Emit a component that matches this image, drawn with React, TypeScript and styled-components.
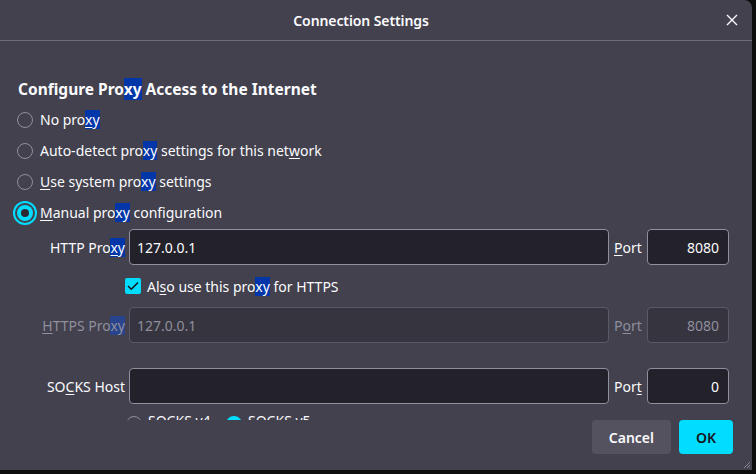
import React from "react";
import styled, { createGlobalStyle, css } from "styled-components";

const Global = createGlobalStyle`
  html, body { margin: 0; padding: 0; background: #0d0d0e; }
  body { font-family: "Noto Sans", "Open Sans", sans-serif; color: #fbfbfe; }
  * { box-sizing: border-box; }
`;

const Dialog = styled.div`
  width: 752px;
  height: 470px;
  background: #42414d;
  border-top-right-radius: 8px;
  display: flex;
  flex-direction: column;
  position: relative;
`;

const Header = styled.div`
  height: 41px;
  border-bottom: 1px solid #6e6d78;
  display: flex;
  align-items: center;
  flex-shrink: 0;
`;

const Title = styled.div`
  flex: 1;
  text-align: center;
  font-size: 14px;
  font-weight: 600;
  letter-spacing: -0.1px;
`;

const CloseBox = styled.div`
  width: 30px;
  padding-right: 10px;
  display: flex;
  justify-content: center;
  align-items: center;
`;

const Content = styled.div`
  height: 379px;
  overflow: hidden;
  padding: 37px 0 0 17px;
  flex-shrink: 0;
`;

const Heading = styled.div`
  font-size: 15.5px;
  font-weight: 700;
  line-height: 22px;
  margin-bottom: 4px;
  padding-left: 1px;
`;

const RadioRow = styled.div`
  height: 31px;
  display: flex;
  align-items: center;
  gap: 7px;
  font-size: 14px;
`;

const RadioCircle = styled.span<{ $checked?: boolean; $focus?: boolean }>`
  width: 16px;
  height: 16px;
  border-radius: 50%;
  flex-shrink: 0;
  border: 1px solid #8f8f9d;
  position: relative;
  ${(p) =>
    p.$checked &&
    css`
      border: none;
      background: #00ddff;
      &::after {
        content: "";
        position: absolute;
        left: 4px;
        top: 4px;
        width: 8px;
        height: 8px;
        border-radius: 50%;
        background: #2b2a33;
      }
    `}
  ${(p) =>
    p.$focus &&
    css`
      outline: 2px solid #00ddff;
      outline-offset: 2px;
    `}
`;

const Hl = styled.span<{ $dim?: boolean }>`
  background: ${(p) => (p.$dim ? "#27448c" : "#0036a8")};
`;

const Key = styled.span`
  text-decoration: underline;
  text-underline-offset: 2px;
`;

const FieldRow = styled.div<{ $mt?: number }>`
  display: flex;
  align-items: center;
  height: 36px;
  margin-top: ${(p) => p.$mt ?? 0}px;
  font-size: 14px;
`;

const FieldLabel = styled.div<{ $disabled?: boolean }>`
  width: 112px;
  padding-right: 4px;
  text-align: right;
  white-space: nowrap;
  color: ${(p) => (p.$disabled ? "#8f8f9d" : "#fbfbfe")};
`;

const Input = styled.div<{ $disabled?: boolean; $w: number; $right?: boolean }>`
  width: ${(p) => p.$w}px;
  height: 36px;
  border-radius: 4px;
  border: 1px solid ${(p) => (p.$disabled ? "#5a5965" : "#8f8f9d")};
  background: ${(p) => (p.$disabled ? "#36353f" : "#23222b")};
  color: ${(p) => (p.$disabled ? "#8f8f9d" : "#fbfbfe")};
  display: flex;
  align-items: center;
  justify-content: ${(p) => (p.$right ? "flex-end" : "flex-start")};
  padding: 0 9px 0 7px;
  font-size: 14px;
`;

const PortLabel = styled.div<{ $disabled?: boolean }>`
  width: 38px;
  padding-left: 5px;
  color: ${(p) => (p.$disabled ? "#8f8f9d" : "#fbfbfe")};
`;

const CheckRow = styled.div`
  height: 42px;
  display: flex;
  align-items: center;
  padding-left: 108px;
  gap: 6px;
  font-size: 14px;
`;

const CheckBox = styled.span`
  width: 16px;
  height: 16px;
  border-radius: 2px;
  background: #00ddff;
  display: flex;
  align-items: center;
  justify-content: center;
`;

const SocksRow = styled.div`
  display: flex;
  align-items: flex-start;
  height: 16px;
  margin-top: 12px;
  padding-left: 109px;
  font-size: 14px;
`;

const SocksOpt = styled.div`
  display: flex;
  align-items: flex-start;
  gap: 6px;
  width: 100px;
`;

const SocksText = styled.span`
  line-height: 14px;
  margin-top: -2px;
`;

const Footer = styled.div`
  display: flex;
  justify-content: flex-end;
  gap: 8px;
  padding: 0 19px 16px 0;
`;

const Button = styled.button<{ $primary?: boolean }>`
  height: 34px;
  border: none;
  border-radius: 4px;
  font-family: inherit;
  font-size: 14px;
  font-weight: 600;
  padding: 0 ${(p) => (p.$primary ? 16 : 17)}px;
  min-width: ${(p) => (p.$primary ? 54 : 78)}px;
  background: ${(p) => (p.$primary ? "#00ddff" : "#53525e")};
  color: ${(p) => (p.$primary ? "#15141a" : "#fbfbfe")};
`;

const Grip = styled.svg`
  position: absolute;
  right: 1px;
  bottom: 1px;
`;

export default function App() {
  return (
    <>
      <Global />
      <Dialog>
        <Header>
          <Title>Connection Settings</Title>
          <CloseBox>
            <svg width="12" height="12" viewBox="0 0 12 12">
              <path d="M1 1L11 11M11 1L1 11" stroke="#fbfbfe" strokeWidth="1.4" fill="none" />
            </svg>
          </CloseBox>
        </Header>
        <Content>
          <Heading>
            Configure Pro<Hl>xy</Hl> Access to the Internet
          </Heading>
          <RadioRow>
            <RadioCircle />
            <span>
              No pro<Hl><Key>x</Key>y</Hl>
            </span>
          </RadioRow>
          <RadioRow>
            <RadioCircle />
            <span>
              Auto-detect pro<Hl>xy</Hl> settings for this net<Key>w</Key>ork
            </span>
          </RadioRow>
          <RadioRow>
            <RadioCircle />
            <span>
              <Key>U</Key>se system pro<Hl>xy</Hl> settings
            </span>
          </RadioRow>
          <RadioRow>
            <RadioCircle $checked $focus />
            <span>
              <Key>M</Key>anual pro<Hl>xy</Hl> configuration
            </span>
          </RadioRow>
          <FieldRow $mt={1}>
            <FieldLabel>
              HTTP Pro<Hl><Key>x</Key>y</Hl>
            </FieldLabel>
            <Input $w={480}>127.0.0.1</Input>
            <PortLabel>
              <Key>P</Key>ort
            </PortLabel>
            <Input $w={82} $right>8080</Input>
          </FieldRow>
          <CheckRow>
            <CheckBox>
              <svg width="12" height="10" viewBox="0 0 12 10">
                <path d="M1 5L4.3 8.3L11 1.5" stroke="#15141a" strokeWidth="1.5" fill="none" />
              </svg>
            </CheckBox>
            <span>
              Al<Key>s</Key>o use this pro<Hl>xy</Hl> for HTTPS
            </span>
          </CheckRow>
          <FieldRow>
            <FieldLabel $disabled>
              <Key>H</Key>TTPS Pro<Hl $dim>xy</Hl>
            </FieldLabel>
            <Input $w={480} $disabled>127.0.0.1</Input>
            <PortLabel $disabled>
              P<Key>o</Key>rt
            </PortLabel>
            <Input $w={82} $right $disabled>8080</Input>
          </FieldRow>
          <FieldRow $mt={25}>
            <FieldLabel>
              SO<Key>C</Key>KS Host
            </FieldLabel>
            <Input $w={480} />
            <PortLabel>
              Por<Key>t</Key>
            </PortLabel>
            <Input $w={82} $right>0</Input>
          </FieldRow>
          <SocksRow>
            <SocksOpt>
              <RadioCircle />
              <SocksText>SOCKS v4</SocksText>
            </SocksOpt>
            <SocksOpt>
              <RadioCircle $checked />
              <SocksText>SOCKS v5</SocksText>
            </SocksOpt>
          </SocksRow>
        </Content>
        <Footer>
          <Button>Cancel</Button>
          <Button $primary>OK</Button>
        </Footer>
        <Grip width="8" height="8" viewBox="0 0 8 8">
          <path d="M7 1L1 7M7 4L4 7M7 6.5L6.5 7" stroke="#8a8993" strokeWidth="1" fill="none" />
        </Grip>
      </Dialog>
    </>
  );
}
